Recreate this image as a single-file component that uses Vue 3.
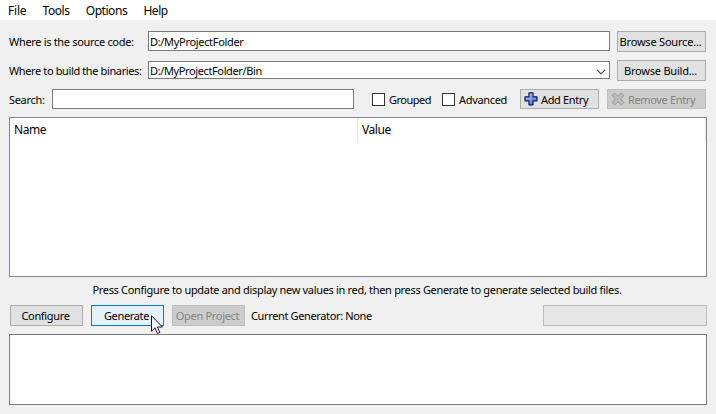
<script setup>
import { ref } from 'vue'

const menus = ['File', 'Tools', 'Options', 'Help']
const source = ref('D:/MyProjectFolder')
const build = ref('D:/MyProjectFolder/Bin')
</script>

<template>
  <div class="window">
    <nav class="menubar">
      <span v-for="m in menus" :key="m" :class="['menu', m.toLowerCase()]">{{ m }}</span>
    </nav>
    <main class="body">
      <div class="row source-row">
        <label class="path-label"><span>Where is the source code:</span></label>
        <div class="field"><span class="path">{{ source }}</span></div>
        <button class="btn browse"><span class="t-bs">Browse Source...</span></button>
      </div>
      <div class="row build-row">
        <label class="path-label"><span class="t-wb">Where to build the binaries:</span></label>
        <div class="field combo">
          <span class="path">{{ build }}</span>
          <svg class="chevron" width="10" height="6" viewBox="0 0 10 6"><path d="M1 .8l4 4 4-4" fill="none" stroke="#505050" stroke-width="1.2" /></svg>
        </div>
        <button class="btn browse"><span class="t-bb">Browse Build...</span></button>
      </div>
      <div class="row search-row">
        <label class="search-label"><span>Search:</span></label>
        <div class="field search"></div>
        <label class="check grouped"><i class="box"></i><span>Grouped</span></label>
        <label class="check advanced"><i class="box"></i><span>Advanced</span></label>
        <button class="btn icon-btn add">
          <svg width="14" height="14" viewBox="0 0 14 14">
            <defs><linearGradient id="plus" x1="0" y1="0" x2="1" y2="1"><stop offset="0" stop-color="#b4cbf8" /><stop offset="1" stop-color="#4a70d0" /></linearGradient></defs>
            <path d="M5 .8h4v4h4v4H9v4H5v-4H1v-4h4z" fill="url(#plus)" stroke="#10135c" stroke-width="1.2" stroke-linejoin="round" />
          </svg>
          <span>Add Entry</span>
        </button>
        <button class="btn icon-btn remove disabled">
          <svg width="14" height="14" viewBox="0 0 14 14">
            <path d="M3.700 1L7 4.200 10.300 1 13 3.500 9.700 6.800 13 10.300 10.300 13 7 9.700 3.700 13 1 10.300 4.300 6.800 1 3.500z" fill="#bcbcbc" stroke="#999" stroke-width="1" stroke-linejoin="round" />
          </svg>
          <span>Remove Entry</span>
        </button>
      </div>
      <section class="table">
        <div class="th name"><span>Name</span></div>
        <div class="th value"><span>Value</span></div>
      </section>
      <p class="hint"><span>Press Configure to update and display new values in red, then press Generate to generate selected build files.</span></p>
      <div class="row action-row">
        <button class="btn action"><span class="t-conf">Configure</span></button>
        <button class="btn action hover"><span class="t-gen">Generate</span></button>
        <button class="btn action disabled"><span class="t-open">Open Project</span></button>
        <div class="generator"><span>Current Generator: None</span></div>
        <div class="progress"></div>
      </div>
      <section class="output"></section>
    </main>
    <svg class="cursor" width="13" height="20" viewBox="0 0 13 20"><path d="M.5.8v15.400l3.500-3.400 2.400 5.700 2.400-1-2.400-5.500h5z" fill="#fff" stroke="#14141e" /></svg>
  </div>
</template>

<style>
body { margin: 0; background: #f0f0f0; }
</style>

<style scoped>
.window { position: relative; width: 716px; height: 414px; overflow: hidden; background: #f0f0f0; color: #000; font: 11px/14px "Noto Sans", sans-serif; letter-spacing: -.32px; }
.window * { box-sizing: border-box; }
span { white-space: nowrap; }
.menubar { height: 20px; background: #fff; display: flex; gap: 16.200px; padding: 3px 0 0 8px; font: 12px/16px "Noto Sans", sans-serif; letter-spacing: -.45px; }
.file { letter-spacing: -.2px; }
.body { padding: 11px 9px 0; }
.row { display: flex; align-items: flex-start; }
.source-row { height: 29px; }
.build-row { height: 29px; }
.path-label { width: 139px; padding-top: 4px; display: block; }
.t-wb { letter-spacing: -.38px; }
.field { width: 462px; height: 20px; border: 1px solid #7a7a7a; background: #fff; padding: 3px 1px; display: flex; }
.combo { margin-top: 1px; height: 18px; padding: 2px 3px 0 1px; justify-content: space-between; letter-spacing: -.38px; }
.chevron { margin-top: 5px; }
.btn { font: inherit; color: inherit; letter-spacing: -.35px; margin: 0; padding: 0 2px 0 0; border: 1px solid #adadad; background: #e1e1e1; border-radius: 0; display: flex; align-items: center; justify-content: center; flex: none; }
.browse { width: 89px; height: 21px; margin-left: 7px; letter-spacing: -.2px; }
.t-bb { letter-spacing: -.2px; }
.search-row { height: 28px; }
.search-label { width: 43px; padding-top: 4px; }
.search { width: 302px; }
.check { display: flex; gap: 4px; padding-top: 4px; margin-left: 18px; width: 52px; }
.grouped { letter-spacing: -.5px; }
.box { width: 13px; height: 13px; border: 1px solid #333; background: #fff; flex: none; }
.icon-btn { height: 20px; justify-content: flex-start; padding-left: 3px; gap: 3px; }
.icon-btn span { padding-top: 2px; }
.add { width: 79px; margin-left: 26px; }
.remove { width: 99px; margin-left: 8px; }
.disabled.disabled { background: #ccc; border-color: #bfbfbf; color: #838383; }
.table { height: 160px; border: 1px solid #828790; background: #fff; display: flex; font: 12px/16px "Noto Sans", sans-serif; letter-spacing: -.45px; }
.th { height: 23px; border-right: 1px solid #e5e5e5; padding: 4px 0 0 4px; }
.name { width: 348px; }
.value { width: 348px; }
.hint { margin: 0; padding: 6px 2px 0 0; height: 28px; text-align: center; }
.action-row { height: 29px; padding-left: 1px; gap: 8px; }
.action { width: 73px; height: 21px; }
.t-open { letter-spacing: -.3px; }
.hover.hover { background: #e5f1fb; border-color: #0078d7; }
.generator { padding-top: 4px; margin-left: -2px; letter-spacing: -.36px; }
.progress { width: 164px; height: 21px; margin-left: auto; border: 1px solid #bcbcbc; background: #e6e6e6; flex: none; }
.output { height: 71px; border: 1px solid #7a7a7a; background: #fff; }
.cursor { position: absolute; left: 151px; top: 315px; }
</style>
